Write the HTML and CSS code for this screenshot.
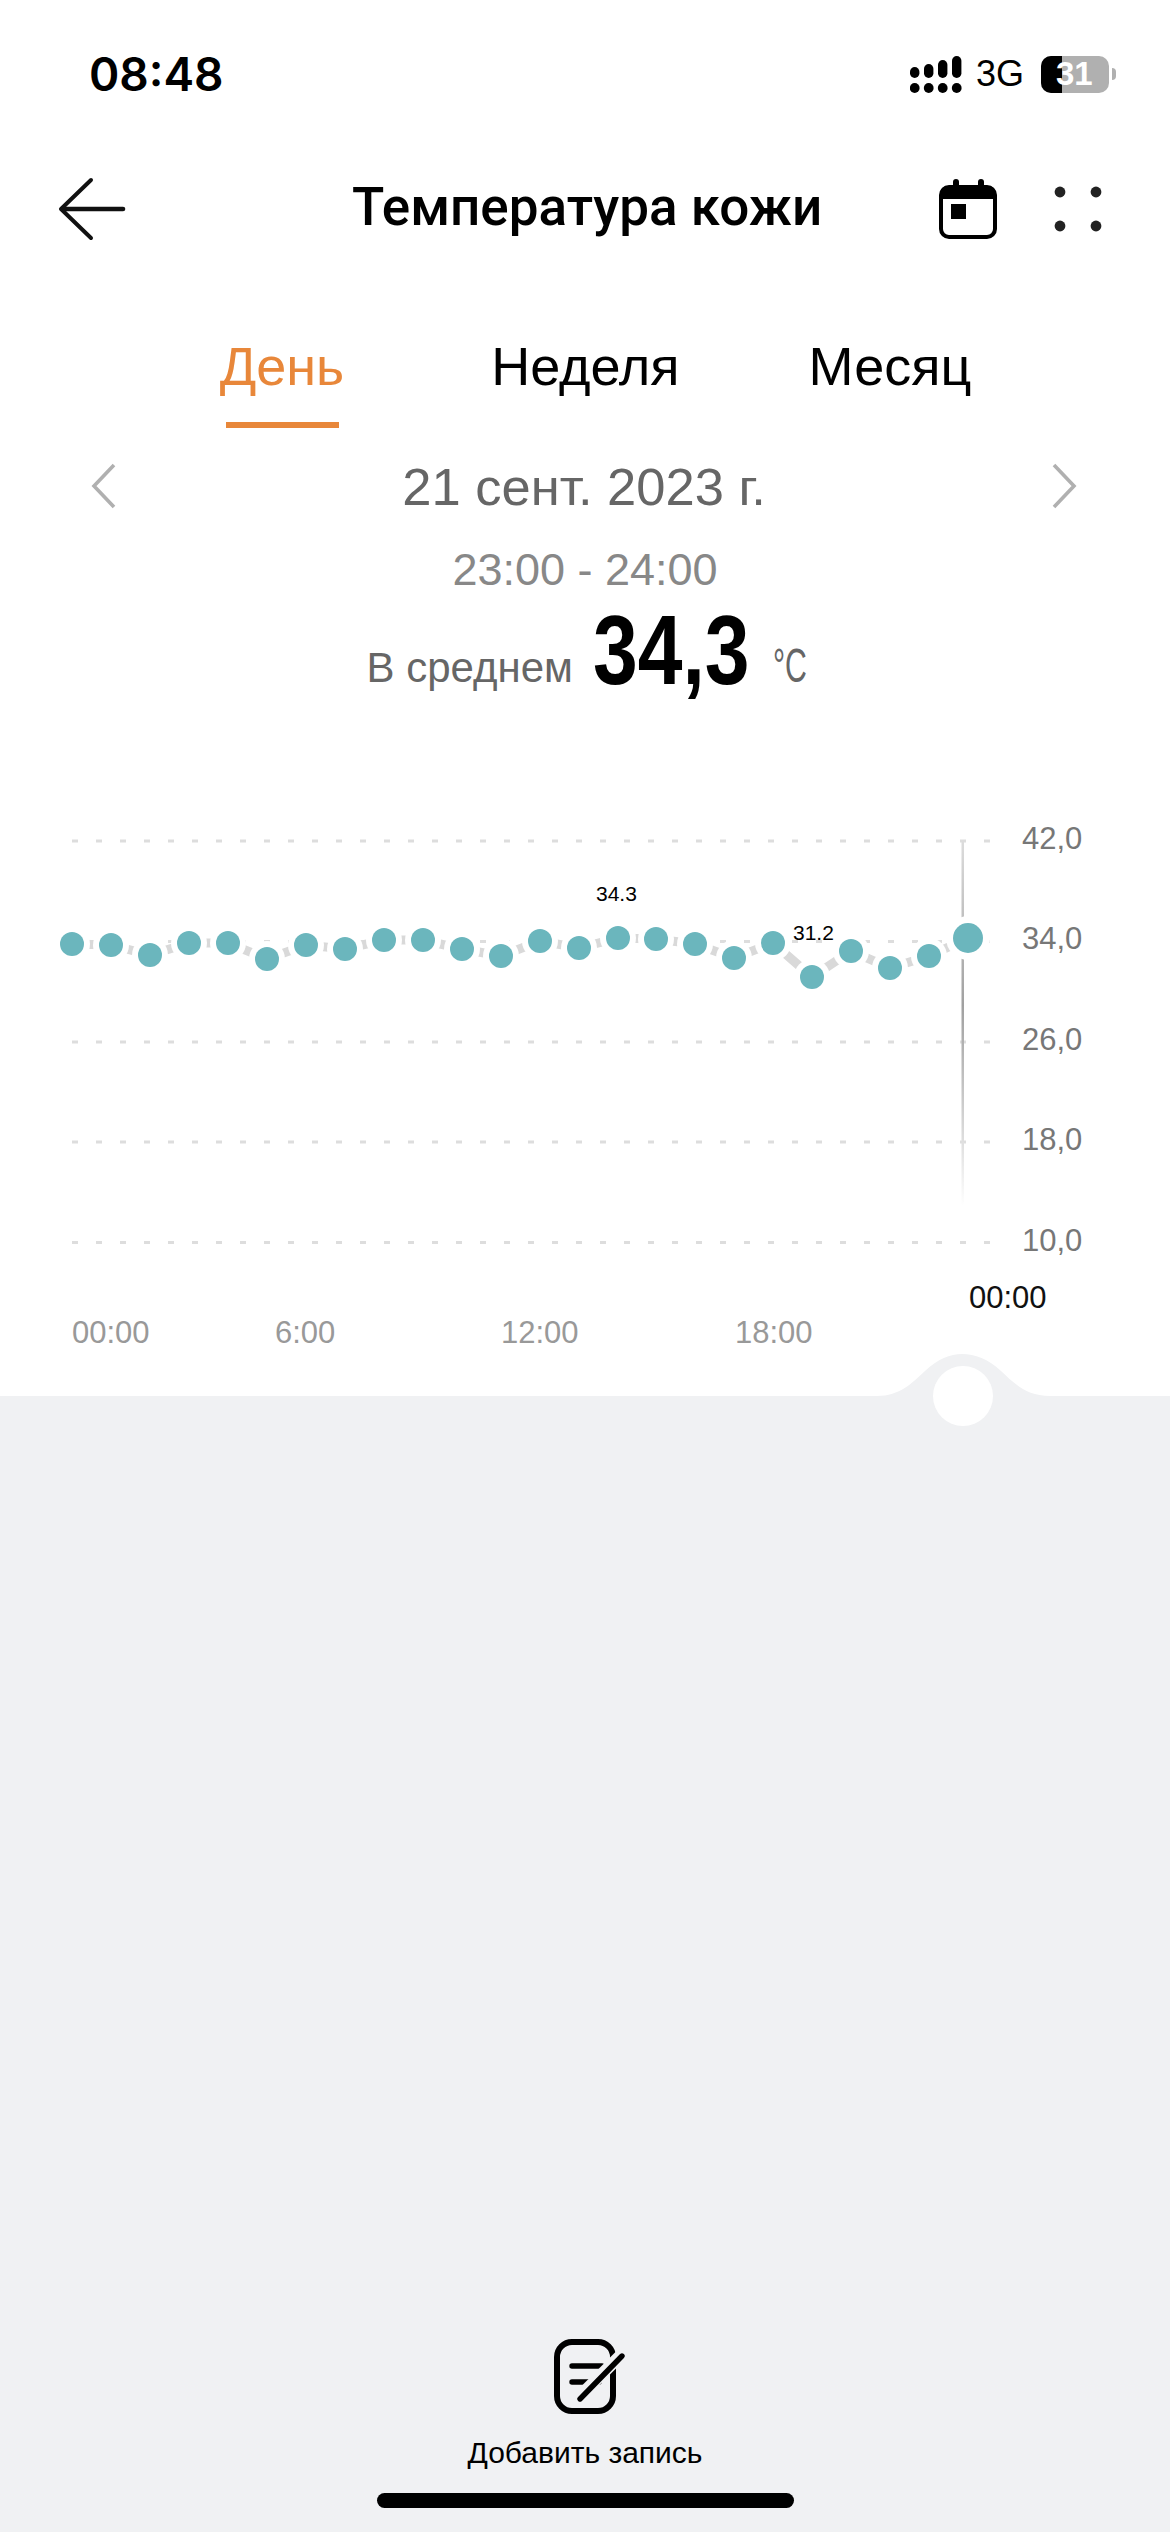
FILE: index.html
```html
<!DOCTYPE html>
<html lang="ru">
<head>
  <meta charset="UTF-8" />
  <meta name="viewport" content="width=device-width, initial-scale=1" />
  <title>Температура кожи</title>
  <link rel="stylesheet" href="styles.css">
</head>
<body>
  <header class="status-bar">
    <span class="status-time">08:48</span>
    <div class="status-right">
      <svg class="signal" width="54" height="38" viewBox="0 0 54 38">
        <rect x="0" y="11" width="9.4" height="11" rx="4.7" />
        <rect x="14" y="8" width="9.4" height="14" rx="4.7" />
        <rect x="28" y="4" width="9.4" height="18" rx="4.7" />
        <rect x="42" y="0" width="9.4" height="22" rx="4.7" />
        <circle cx="4.7" cy="32" r="4.9" />
        <circle cx="18.7" cy="32" r="4.9" />
        <circle cx="32.7" cy="32" r="4.9" />
        <circle cx="46.7" cy="32" r="4.9" />
      </svg>
      <span class="network">3G</span>
      <div class="battery">
        <div class="battery-body"><span class="battery-level"></span><span class="battery-text">31</span></div>
        <span class="battery-cap"></span>
      </div>
    </div>
  </header>

  <nav class="nav-bar">
    <svg class="back-icon" width="68" height="64" viewBox="0 0 68 64" fill="none" stroke="#111" stroke-linecap="round" stroke-linejoin="round">
      <path d="M33 3 L3 32 L33 61" stroke-width="4" />
      <path d="M4 32 H65" stroke-width="4.6" />
    </svg>
    <h1 class="nav-title">Температура кожи</h1>
    <div class="nav-actions">
      <svg width="58" height="60" viewBox="0 0 58 60">
        <rect x="14" y="0" width="6" height="12" rx="3" />
        <rect x="39" y="0" width="6" height="12" rx="3" />
        <rect x="2" y="8" width="54" height="50" rx="8" fill="none" stroke="#000" stroke-width="4" />
        <path d="M2 20 V14 Q2 7 9 7 H49 Q56 7 56 14 V20 Z" />
        <rect x="12" y="25" width="15" height="15" />
      </svg>
      <svg width="48" height="46" viewBox="0 0 48 46" fill="#222">
        <circle cx="6" cy="6" r="5.4" />
        <circle cx="42" cy="6" r="5.4" />
        <circle cx="6" cy="40" r="5.4" />
        <circle cx="42" cy="40" r="5.4" />
      </svg>
    </div>
  </nav>

  <div class="tabs">
    <div class="tab active">День</div>
    <div class="tab">Неделя</div>
    <div class="tab">Месяц</div>
  </div>

  <div class="date-row">
    <svg width="26" height="46" viewBox="0 0 26 46" fill="none" stroke="#b0b0b0" stroke-width="3.6"><path d="M23 2 L3 23 L23 44" /></svg>
    <span class="date-text">21 сент. 2023 г.</span>
    <svg width="26" height="46" viewBox="0 0 26 46" fill="none" stroke="#b0b0b0" stroke-width="3.6"><path d="M3 2 L23 23 L3 44" /></svg>
  </div>

  <div class="time-range">23:00 - 24:00</div>

  <div class="average">
    <span class="average-label">В среднем</span>
    <span class="average-value">34,3</span>
    <span class="average-unit">°C</span>
  </div>

  <svg class="chart" width="1170" height="630" viewBox="0 800 1170 630">
    <defs>
      <linearGradient id="cursor" x1="0" y1="0" x2="0" y2="1">
        <stop offset="0" stop-color="#dcdcdc" />
        <stop offset="0.45" stop-color="#a0a0a0" />
        <stop offset="0.7" stop-color="#c8c8c8" />
        <stop offset="1" stop-color="#ffffff" />
      </linearGradient>
    </defs>

    <g class="grid-lines">
      <line x1="72" y1="840" x2="990" y2="840" />
      <line x1="72" y1="940.5" x2="990" y2="940.5" />
      <line x1="72" y1="1041" x2="990" y2="1041" />
      <line x1="72" y1="1141" x2="990" y2="1141" />
      <line x1="72" y1="1241.5" x2="990" y2="1241.5" />
    </g>

    <rect x="961.5" y="840" width="2.5" height="365" fill="url(#cursor)" />

    <polyline class="trend" points="72,943 111,944 150,954 189,942 228,942 267,958 306,944 345,948 384,939 423,939 462,948 501,955 540,940 579,947 618,937 656,938 695,943 734,957 773,942 812,976 851,950 890,967 929,955 968,937" />

    <g class="halos">
      <circle cx="72" cy="943" r="18" /><circle cx="111" cy="944" r="18" /><circle cx="150" cy="954" r="18" />
      <circle cx="189" cy="942" r="18" /><circle cx="228" cy="942" r="18" /><circle cx="267" cy="958" r="18" />
      <circle cx="306" cy="944" r="18" /><circle cx="345" cy="948" r="18" /><circle cx="384" cy="939" r="18" />
      <circle cx="423" cy="939" r="18" /><circle cx="462" cy="948" r="18" /><circle cx="501" cy="955" r="18" />
      <circle cx="540" cy="940" r="18" /><circle cx="579" cy="947" r="18" /><circle cx="618" cy="937" r="18" />
      <circle cx="656" cy="938" r="18" /><circle cx="695" cy="943" r="18" /><circle cx="734" cy="957" r="18" />
      <circle cx="773" cy="942" r="18" /><circle cx="812" cy="976" r="18" /><circle cx="851" cy="950" r="18" />
      <circle cx="890" cy="967" r="18" /><circle cx="929" cy="955" r="18" /><circle cx="968" cy="937" r="22" />
    </g>

    <g class="dots">
      <circle cx="72" cy="943" r="12" /><circle cx="111" cy="944" r="12" /><circle cx="150" cy="954" r="12" />
      <circle cx="189" cy="942" r="12" /><circle cx="228" cy="942" r="12" /><circle cx="267" cy="958" r="12" />
      <circle cx="306" cy="944" r="12" /><circle cx="345" cy="948" r="12" /><circle cx="384" cy="939" r="12" />
      <circle cx="423" cy="939" r="12" /><circle cx="462" cy="948" r="12" /><circle cx="501" cy="955" r="12" />
      <circle cx="540" cy="940" r="12" /><circle cx="579" cy="947" r="12" /><circle cx="618" cy="937" r="12" />
      <circle cx="656" cy="938" r="12" /><circle cx="695" cy="943" r="12" /><circle cx="734" cy="957" r="12" />
      <circle cx="773" cy="942" r="12" /><circle cx="812" cy="976" r="12" /><circle cx="851" cy="950" r="12" />
      <circle cx="890" cy="967" r="12" /><circle cx="929" cy="955" r="12" /><circle cx="968" cy="937" r="15" />
    </g>

    <text class="point-label" x="596" y="900">34.3</text>
    <text class="point-label" x="793" y="939">31.2</text>

    <g class="y-labels">
      <text x="1022" y="848">42,0</text>
      <text x="1022" y="948">34,0</text>
      <text x="1022" y="1049">26,0</text>
      <text x="1022" y="1149">18,0</text>
      <text x="1022" y="1250">10,0</text>
    </g>

    <g class="x-labels">
      <text x="72" y="1342">00:00</text>
      <text x="275" y="1342">6:00</text>
      <text x="501" y="1342">12:00</text>
      <text x="735" y="1342">18:00</text>
    </g>
    <text class="x-current" x="969" y="1307">00:00</text>

    <path class="sheet" d="M0 1395 H877 C900 1395 912 1382 925 1370 C938 1358 950 1353 962 1353 C975 1353 988 1358 1001 1370 C1014 1382 1026 1395 1050 1395 H1170 V1430 H0 Z" />
    <circle cx="963" cy="1395" r="30" fill="#fff" />
  </svg>

  <section class="lower">
    <svg class="note-icon" width="72" height="80" viewBox="0 0 72 80" fill="none" stroke-linecap="round">
      <rect x="3" y="3" width="56" height="69" rx="15" stroke="#000" stroke-width="6" />
      <path d="M18 27 H48" stroke="#000" stroke-width="5.4" />
      <path d="M18 43 H45" stroke="#000" stroke-width="5.4" />
      <path d="M24 59 L68 15" stroke="#f0f1f3" stroke-width="12" />
      <path d="M26 60 L68 17" stroke="#000" stroke-width="5.4" />
    </svg>
    <div class="note-label">Добавить запись</div>
    <div class="home-bar"></div>
  </section>
</body>
</html>
```

FILE: styles.css
```css
body {
  font-family: "Liberation Sans", Arial, sans-serif;
  margin: 0;
  background: #fff;
  color: #000;
  min-height: 2532px;
  display: flex;
  flex-direction: column;
}
.status-bar {
  display: flex;
  justify-content: space-between;
  align-items: center;
  height: 56px;
  padding: 46px 54px 0 89px;
}
.status-time {
  font-family: Inter, sans-serif;
  font-size: 46px;
  font-weight: 600;
}
.status-right {
  display: flex;
  align-items: center;
}
.signal {
  margin-right: 12px;
  margin-top: 1px;
}
.network {
  font-size: 36px;
  margin-right: 17px;
}
.battery {
  display: flex;
  align-items: center;
}
.battery-body {
  display: flex;
  justify-content: center;
  align-items: center;
  width: 68px;
  height: 37px;
  border-radius: 10px;
  background: #b0b0b0;
  overflow: hidden;
  color: #fff;
  font-size: 33px;
  font-weight: bold;
}
.battery-level {
  width: 21px;
  height: 37px;
  background: #000;
  flex-shrink: 0;
  margin-right: -6px;
}
.battery-text {
  flex: 1;
}
.battery-cap {
  width: 4px;
  height: 12px;
  margin-left: 3px;
  border-radius: 0 4px 4px 0;
  background: #b0b0b0;
}
.nav-bar {
  display: flex;
  align-items: center;
  padding: 0 68px 0 58px;
  margin-top: 75px;
  height: 64px;
}
.nav-title {
  margin: 0 0 0 226px;
  padding-bottom: 5px;
  font-family: Roboto, sans-serif;
  font-size: 53px;
  font-weight: 500;
}
.nav-actions {
  display: flex;
  align-items: center;
  gap: 57px;
  margin-left: auto;
}
.tabs {
  display: flex;
  justify-content: center;
  gap: 129px;
  margin-top: 95px;
  padding-left: 21px;
}
.tab {
  font-size: 54px;
  line-height: 60px;
}
.tab::after {
  content: "";
  display: block;
  height: 6px;
  margin-top: 26px;
}
.tab.active {
  color: #e8873a;
  margin-right: 18px;
}
.tab.active::after {
  background: #e8873a;
  margin-left: 6px;
  margin-right: 5px;
}
.date-row {
  display: flex;
  justify-content: space-between;
  align-items: center;
  padding: 0 93px 0 91px;
  margin-top: 35px;
  height: 46px;
}
.date-text {
  font-size: 52.5px;
  color: #666;
}
.time-range {
  text-align: center;
  font-size: 45px;
  color: #888;
  margin-top: 35px;
}
.average {
  display: flex;
  justify-content: center;
  align-items: baseline;
  line-height: 100px;
  height: 100px;
  margin-top: 2px;
  padding-left: 3px;
}
.average-label {
  font-size: 42px;
  color: #666;
}
/* no condensed face installed, so the number is squeezed */
.average-value {
  display: inline-block;
  font-size: 98px;
  font-weight: bold;
  transform: scaleX(0.82) translateY(2px);
  transform-origin: left;
  margin: 0 -11px 0 20px;
}
.average-unit {
  display: inline-block;
  font-size: 48px;
  color: #666;
  transform: scaleX(0.63);
  transform-origin: left;
  margin-right: -20px;
}
.chart {
  display: block;
  flex-shrink: 0;
  margin-top: 103px;
}
.grid-lines line {
  stroke: #ddd;
  stroke-width: 3;
  stroke-dasharray: 6 18;
}
.trend {
  fill: none;
  stroke: #d9d9d9;
  stroke-width: 9;
}
.halos circle {
  fill: #fff;
}
.dots circle {
  fill: #6bb6bd;
}
.point-label {
  font-size: 21px;
  fill: #000;
}
.y-labels text {
  font-size: 31px;
  fill: #777;
}
.x-labels text {
  font-size: 31px;
  fill: #999;
}
.x-current {
  font-size: 31px;
  fill: #111;
}
.sheet {
  fill: #f0f1f3;
}
.lower {
  flex: 1;
  background: #f0f1f3;
  display: flex;
  flex-direction: column;
  align-items: center;
  justify-content: flex-end;
  padding-bottom: 24px;
}
.note-icon {
  margin-left: 10px;
  display: block;
}
.note-label {
  font-size: 30px;
  margin-top: 17px;
}
.home-bar {
  width: 417px;
  height: 15px;
  border-radius: 8px;
  background: #000;
  margin-top: 23px;
}
```
